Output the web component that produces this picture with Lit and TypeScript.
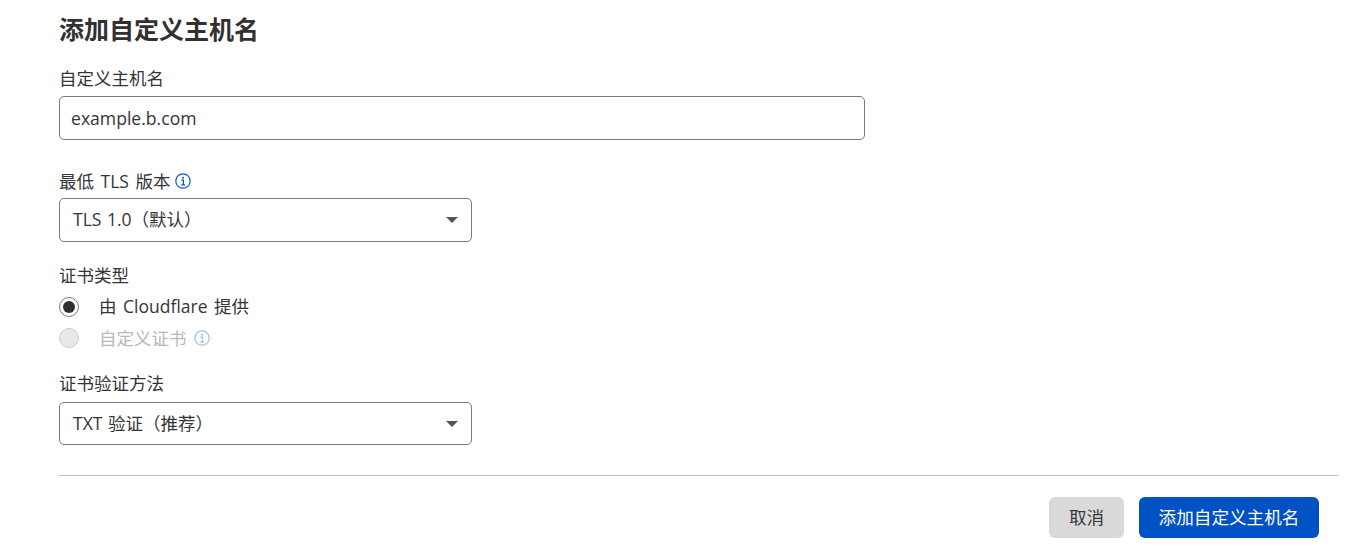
import { LitElement, html, css, svg } from "lit";
import { customElement } from "lit/decorators.js";

const info = svg`<svg class="info" viewBox="0 0 16 16" width="16" height="16" fill="none">
  <circle cx="8" cy="8" r="7.2" stroke="currentColor" stroke-width="1.2"/>
  <circle cx="8" cy="4.7" r="1" fill="currentColor"/>
  <path d="M6.4 7.2H8.4V11.6M6.2 11.8H10" stroke="currentColor" stroke-width="1.2"/>
</svg>`;

const caret = html`<span class="caret"></span>`;

@customElement("app-root")
export class AppRoot extends LitElement {
  static styles = css`
    :host {
      display: block;
      width: 1370px;
      height: 557px;
      box-sizing: border-box;
      overflow: hidden;
      background: #fff;
      color: #333637;
      font-family: "Open Sans", "Noto Sans CJK SC", sans-serif;
      font-size: 17.5px;
      padding: 0 31px 0 59px;
    }
    h1 {
      margin: 0;
      height: 60px;
      line-height: 58px;
      font-size: 25px;
      font-weight: 700;
      color: #313131;
    }
    .label {
      box-sizing: border-box;
      display: flex;
      align-items: center;
      gap: 5px;
      height: 36px;
      padding-bottom: 2px;
      word-spacing: 2px;
    }
    .label.tight {
      height: 35px;
      padding-bottom: 0;
    }
    .label.short {
      height: 31px;
    }
    .label.raised {
      padding-bottom: 4px;
    }
    .input,
    .select {
      box-sizing: border-box;
      border: 1px solid #797979;
      border-radius: 5px;
      background: #fff;
      display: flex;
      align-items: center;
      color: #333637;
    }
    .input {
      width: 806px;
      height: 44px;
      padding: 0 11px;
      font-size: 17.6px;
    }
    .select {
      width: 413px;
      height: 44px;
      padding: 0 13px;
      justify-content: space-between;
      word-spacing: 1px;
    }
    .select.second {
      height: 43px;
    }
    .select .value {
      padding-bottom: 3px;
    }
    .caret {
      width: 0;
      height: 0;
      border-left: 6.5px solid transparent;
      border-right: 6.5px solid transparent;
      border-top: 6.5px solid #555;
    }
    .group {
      margin-top: 23px;
    }
    .group.cert {
      margin-top: 18px;
    }
    .group.method {
      margin-top: 14px;
    }
    .radio-row {
      display: flex;
      align-items: center;
      height: 31px;
      gap: 20px;
      word-spacing: 2px;
    }
    .radio-text {
      padding-bottom: 2px;
    }
    .radio {
      box-sizing: border-box;
      width: 20px;
      height: 20px;
      border-radius: 50%;
      border: 1px solid #797979;
      display: flex;
      align-items: center;
      justify-content: center;
    }
    .radio.on::after {
      content: "";
      width: 12px;
      height: 12px;
      border-radius: 50%;
      background: #313131;
    }
    .disabled {
      color: #b9b9b9;
    }
    .disabled .radio {
      background: #e8e8e8;
      border-color: #c9c9c9;
    }
    .disabled-label {
      display: flex;
      align-items: center;
      gap: 7px;
    }
    .info {
      color: #0a51c1;
      display: block;
    }
    .disabled .info {
      color: #9cc0e4;
    }
    hr {
      border: 0;
      border-top: 1px solid #bdbdbd;
      margin: 30px 0 0;
    }
    .actions {
      display: flex;
      justify-content: flex-end;
      gap: 15px;
      padding: 21px 20px 0 0;
    }
    .btn {
      box-sizing: border-box;
      height: 41px;
      border-radius: 6px;
      display: flex;
      align-items: center;
      justify-content: center;
      font-size: 17.6px;
      padding-bottom: 3px;
    }
    .cancel {
      width: 75px;
      background: #d9d9d9;
      color: #36393a;
    }
    .primary {
      width: 180px;
      background: #0051c3;
      color: #fff;
    }
  `;

  render() {
    return html`
      <h1>添加自定义主机名</h1>
      <div class="label">自定义主机名</div>
      <div class="input">example.b.com</div>
      <div class="group">
        <div class="label tight">最低 TLS 版本 ${info}</div>
        <div class="select"><span class="value">TLS 1.0（默认）</span>${caret}</div>
      </div>
      <div class="group cert">
        <div class="label short">证书类型</div>
        <div class="radio-row"><span class="radio on"></span><span class="radio-text">由 Cloudflare 提供</span></div>
        <div class="radio-row disabled">
          <span class="radio"></span>
          <span class="disabled-label">自定义证书 ${info}</span>
        </div>
      </div>
      <div class="group method">
        <div class="label tight raised">证书验证方法</div>
        <div class="select second"><span class="value">TXT 验证（推荐）</span>${caret}</div>
      </div>
      <hr />
      <div class="actions">
        <div class="btn cancel">取消</div>
        <div class="btn primary">添加自定义主机名</div>
      </div>
    `;
  }
}
